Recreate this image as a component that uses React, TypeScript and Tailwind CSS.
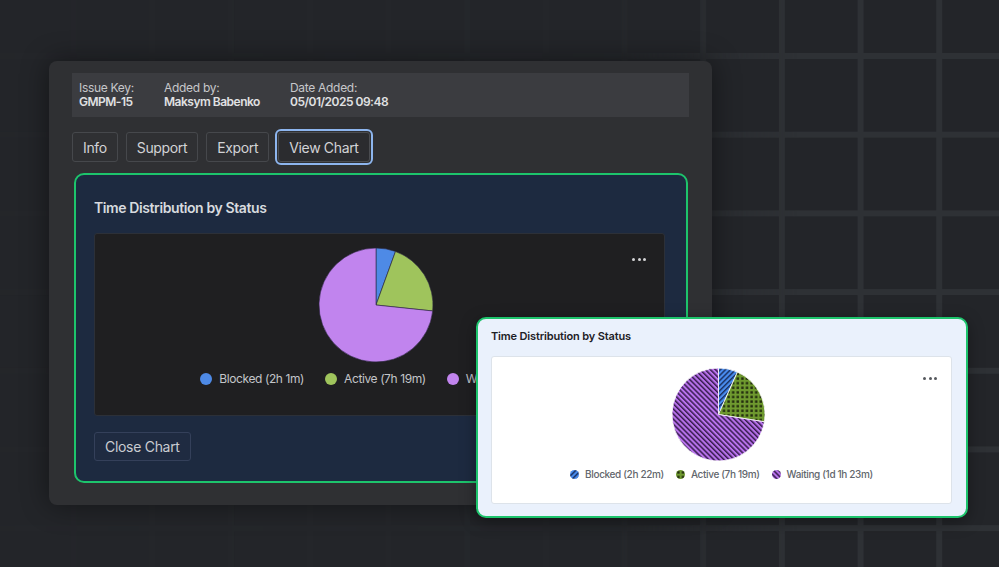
import React from "react";

type Slice = {
    label: string;
    from: number;
    to: number;
    fill: string;
};

const DARK_SLICES: Slice[] = [
    { label: "Blocked (2h 1m)", from: 0, to: 20, fill: "#4e8ae6" },
    { label: "Active (7h 19m)", from: 20, to: 96, fill: "#9fc45c" },
    { label: "Waiting (1d 1h 23m)", from: 96, to: 360, fill: "#c184ee" },
];

const LIGHT_SLICES: Slice[] = [
    { label: "Blocked (2h 22m)", from: 0, to: 24, fill: "url(#pat-blue)" },
    { label: "Active (7h 19m)", from: 24, to: 99, fill: "url(#pat-green)" },
    { label: "Waiting (1d 1h 23m)", from: 99, to: 360, fill: "url(#pat-purple)" },
];

function arcPath(cx: number, cy: number, r: number, a0: number, a1: number) {
    const rad = (a: number) => ((a - 90) * Math.PI) / 180;
    const x0 = cx + r * Math.cos(rad(a0));
    const y0 = cy + r * Math.sin(rad(a0));
    const x1 = cx + r * Math.cos(rad(a1));
    const y1 = cy + r * Math.sin(rad(a1));
    const large = a1 - a0 > 180 ? 1 : 0;
    return `M ${cx} ${cy} L ${x0} ${y0} A ${r} ${r} 0 ${large} 1 ${x1} ${y1} Z`;
}

export default function App() {
    return (
        <div
            className="relative w-[999px] h-[567px] overflow-hidden bg-[#232529]"
            style={{ fontFamily: "Inter, 'Noto Sans', sans-serif" }}
        >
            <GridBackdrop />

            <div className="relative pt-[61px] pl-[49px]">
                <IssuePanel />
            </div>

            <LightChartCard />
        </div>
    );
}

function GridBackdrop() {
    return (
        <div className="absolute inset-0 pointer-events-none bg-[linear-gradient(to_right,#2e3135_6px,transparent_6px),linear-gradient(to_bottom,#2e3135_6px,transparent_6px)] bg-[size:78.7px_78.7px] bg-[position:70.7px_53px] [mask-image:linear-gradient(to_right,rgba(0,0,0,0.1),rgba(0,0,0,0.18)_62%,black_80%)]" />
    );
}

function IssuePanel() {
    return (
        <div className="w-[663px] h-[444px] rounded-lg bg-[#2f3033] pt-[12px] px-[23px] shadow-[0_0_28px_rgba(0,0,0,0.45)]">
            <div className="h-[44px] bg-[#3b3c40] px-[7px] flex items-center text-[12px] leading-[14px]">
                <MetaField label="Issue Key:" value="GMPM-15" width="w-[85px]" />
                <MetaField label="Added by:" value="Maksym Babenko" width="w-[126px]" />
                <MetaField label="Date Added:" value="05/01/2025 09:48" width="" />
            </div>

            <div className="mt-[15px] flex items-center gap-2">
                <TabButton>Info</TabButton>
                <TabButton>Support</TabButton>
                <TabButton>Export</TabButton>
                <TabButton active>View Chart</TabButton>
            </div>

            <DarkChartCard />
        </div>
    );
}

function MetaField({ label, value, width }: { label: string; value: string; width: string }) {
    return (
        <div className={`flex flex-col ${width}`}>
            <span className="text-[#c6c7ca] tracking-[-0.3px]">{label}</span>
            <span className="font-semibold text-[#e0e1e3] tracking-[-0.5px]">{value}</span>
        </div>
    );
}

function TabButton({ children, active }: { children: React.ReactNode; active?: boolean }) {
    return (
        <button
            className={
                active
                    ? "ml-[1px] h-[30px] px-[10px] rounded-[3px] border border-[#4a4c50] bg-[#2b2c2f] text-[14px] tracking-[-0.35px] text-[#d2d3d6] outline-2 outline-offset-1 outline-[#8db5ee]"
                    : "h-[30px] px-[10px] rounded-[3px] border border-[#46484c] text-[14px] tracking-[-0.35px] text-[#d2d3d6]"
            }
        >
            {children}
        </button>
    );
}

function DarkChartCard() {
    return (
        <div className="mt-[11px] ml-[2px] w-[614px] h-[310px] rounded-[10px] border-2 border-[#1dc46c] bg-[#1d2a40] pt-[23px] pl-[18px] pr-[21px]">
            <h3 className="text-[14px] leading-[20px] font-semibold tracking-[-0.4px] text-[#d7dadf]">
                Time Distribution by Status
            </h3>

            <div className="relative mt-[15px] h-[183px] rounded-[3px] border border-[#2c3038] bg-[#1f1f21] flex flex-col items-center">
                <DotsMenu className="bg-[#d4d4d6]" pos="top-[24px] right-[18px]" />

                <svg width="116" height="116" className="mt-[13px] ml-[-7px]">
                    {DARK_SLICES.map((s, i) => (
                        <path
                            key={i}
                            d={arcPath(58, 58, 57, s.from, s.to)}
                            fill={s.fill}
                            stroke="#2a2540"
                            strokeWidth="0.6"
                        />
                    ))}
                </svg>

                <div className="mt-[8px] ml-[10px] flex items-center gap-[21px] text-[12px] leading-[16px] tracking-[-0.4px] text-[#c3c5c9]">
                    {DARK_SLICES.map((s, i) => (
                        <div key={i} className="flex items-center gap-[7px]">
                            <span className="w-[12px] h-[12px] rounded-full" style={{ backgroundColor: s.fill }} />
                            {s.label}
                        </div>
                    ))}
                </div>
            </div>

            <button className="mt-[16px] h-[29px] px-[10px] rounded-[3px] border border-[#34405a] bg-[#1f2b41] text-[14px] tracking-[-0.3px] text-[#c9ccd1]">
                Close Chart
            </button>
        </div>
    );
}

function DotsMenu({ className, pos }: { className: string; pos: string }) {
    return (
        <div className={`absolute ${pos} flex gap-[2.5px]`}>
            <span className={`w-[3px] h-[3px] rounded-full ${className}`} />
            <span className={`w-[3px] h-[3px] rounded-full ${className}`} />
            <span className={`w-[3px] h-[3px] rounded-full ${className}`} />
        </div>
    );
}

function PatternDefs() {
    return (
        <defs>
            <pattern id="pat-blue" patternUnits="userSpaceOnUse" width="3.6" height="3.6" patternTransform="rotate(45)">
                <rect width="3.6" height="3.6" fill="#4a8ef2" />
                <rect width="1.5" height="3.6" fill="#1b3262" />
            </pattern>
            <pattern id="pat-green" patternUnits="userSpaceOnUse" width="4.6" height="4.6">
                <rect width="4.6" height="4.6" fill="#6f9a2f" />
                <rect x="1.2" y="1.2" width="2.4" height="2.4" fill="#222c0e" />
            </pattern>
            <pattern id="pat-purple" patternUnits="userSpaceOnUse" width="3.6" height="3.6" patternTransform="rotate(-45)">
                <rect width="3.6" height="3.6" fill="#b872ec" />
                <rect width="1.5" height="3.6" fill="#371c4e" />
            </pattern>
        </defs>
    );
}

function LightChartCard() {
    return (
        <div className="absolute left-[476px] top-[317px] w-[492px] h-[201px] rounded-[10px] border-2 border-[#1dc46c] bg-[#eaf1fc] pt-[10px] pl-[13px] pr-[14px] shadow-[0_4px_16px_rgba(0,0,0,0.35)]">
            <h3 className="text-[11px] leading-[14px] font-semibold tracking-[-0.15px] text-[#1d2025]">
                Time Distribution by Status
            </h3>

            <div className="relative mt-[13px] h-[148px] rounded-[3px] border border-[#dde3ea] bg-white flex flex-col items-center">
                <DotsMenu className="bg-[#55585d]" pos="top-[20px] right-[14px]" />

                <svg width="95" height="95" className="mt-[10px] ml-[-7px]">
                    <PatternDefs />
                    {LIGHT_SLICES.map((s, i) => (
                        <path
                            key={i}
                            d={arcPath(47.5, 47.5, 46.5, s.from, s.to)}
                            fill={s.fill}
                            stroke="#ffffff"
                            strokeWidth="0.8"
                        />
                    ))}
                </svg>

                <div className="mt-[6px] flex items-center gap-[12px] text-[10px] leading-[12px] font-medium tracking-[-0.35px] text-[#62666c]">
                    {LIGHT_SLICES.map((s, i) => (
                        <div key={i} className="flex items-center gap-[6px]">
                            <svg width="9" height="9">
                                <circle cx="4.5" cy="4.5" r="4.5" fill={s.fill} />
                            </svg>
                            {s.label}
                        </div>
                    ))}
                </div>
            </div>
        </div>
    );
}
